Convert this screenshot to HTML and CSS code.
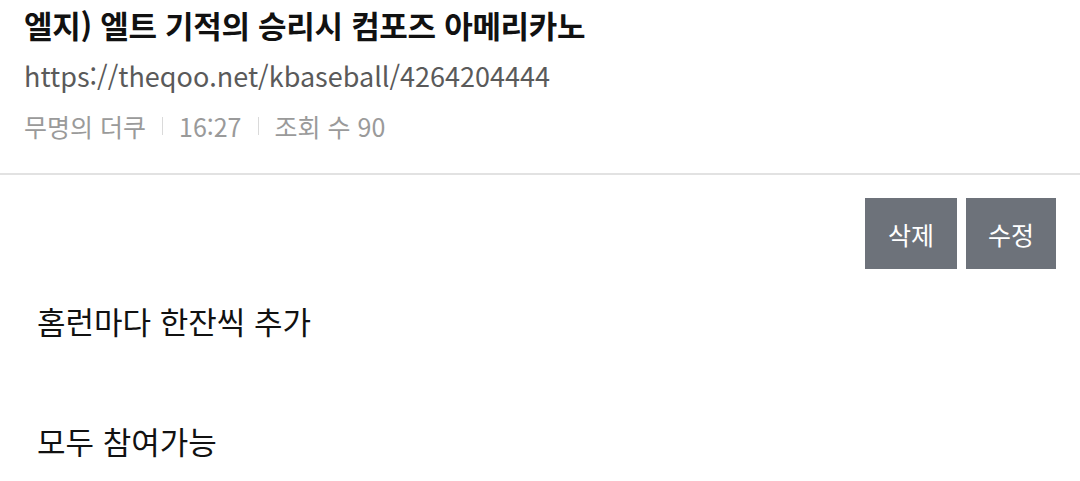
FILE: index.html
```html
<!DOCTYPE html>
<html lang="ko">
<head>
  <meta charset="UTF-8">
  <meta name="viewport" content="width=device-width, initial-scale=1.0">
  <title>엘지) 엘트 기적의 승리시 컴포즈 아메리카노</title>
  <link rel="stylesheet" href="styles.css">
</head>
<body>
  <div class="post-header">
    <h1 class="post-title">엘지) 엘트 기적의 승리시 컴포즈 아메리카노</h1>
    <div class="post-url">https://theqoo.net/kbaseball/4264204444</div>
    <div class="post-meta">
      <span>무명의 더쿠</span>
      <span class="sep"></span>
      <span>16:27</span>
      <span class="sep"></span>
      <span>조회 수 90</span>
    </div>
  </div>

  <div class="post-actions">
    <button type="button" class="btn">삭제</button>
    <button type="button" class="btn">수정</button>
  </div>

  <div class="post-body">
    <p>홈런마다 한잔씩 추가</p>
    <p>&nbsp;</p>
    <p>모두 참여가능</p>
  </div>
</body>
</html>
```

FILE: styles.css
```css
body {
  margin: 0;
  background: #fff;
  font-family: "Noto Sans CJK KR", "Noto Sans", sans-serif;
  color: #111;
}
.post-header {
  padding: 2px 24px 0;
  border-bottom: 2px solid #e2e2e2;
  height: 175px;
  box-sizing: border-box;
}
.post-title {
  margin: 0;
  font-size: 31px;
  font-weight: 700;
  line-height: 46px;
  letter-spacing: -0.3px;
}
.post-url {
  margin-top: 10px;
  font-size: 27px;
  line-height: 36px;
  color: #5a5a5a;
}
.post-meta {
  margin-top: 15px;
  display: flex;
  align-items: center;
  font-size: 25px;
  line-height: 34px;
  color: #9a9a9a;
}
.post-meta .sep {
  width: 1px;
  height: 18px;
  background: #dadada;
  margin: 0 16px;
}
.post-actions {
  display: flex;
  justify-content: flex-end;
  gap: 9px;
  padding: 23px 24px 0;
}
.btn {
  width: 92px;
  height: 71px;
  border: none;
  background: #6d727a;
  color: #fff;
  font-family: inherit;
  font-size: 25px;
  padding: 0;
}
.btn + .btn {
  width: 90px;
}
.post-body {
  padding: 22px 37px 0;
}
.post-body p {
  margin: 0;
  font-size: 31px;
  line-height: 60px;
}
```
